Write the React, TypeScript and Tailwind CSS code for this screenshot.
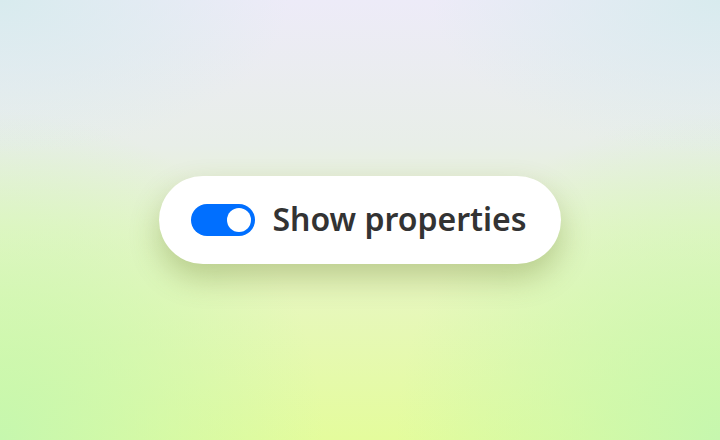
export default function App() {
  return (
    <div className="w-[720px] h-[440px] flex items-center justify-center bg-[radial-gradient(ellipse_40%_35%_at_0%_0%,#d8ebee_0%,transparent_100%),radial-gradient(ellipse_40%_35%_at_100%_0%,#d8ebee_0%,transparent_100%),radial-gradient(ellipse_45%_75%_at_0%_100%,#c6f7ae_0%,transparent_100%),radial-gradient(ellipse_45%_75%_at_100%_100%,#c6f7ae_0%,transparent_100%),linear-gradient(180deg,#edebf8_0%,#e8eee8_33%,#e8f5cc_52%,#e4fc9c_100%)]">
      <div className="flex items-center gap-[17px] h-[88px] pl-[32px] pr-[34px] rounded-full bg-white shadow-[0_14px_30px_rgba(90,110,20,0.3)]">
        <div className="relative w-[64px] h-[32px] rounded-full bg-[#006fff] flex items-center justify-end pr-[4px]">
          <div className="w-[24px] h-[24px] rounded-full bg-white" />
        </div>
        <span className="text-[32px] leading-none font-semibold text-[#333333] font-['Noto_Sans',sans-serif] pb-[2px]">
          Show properties
        </span>
      </div>
    </div>
  );
}
